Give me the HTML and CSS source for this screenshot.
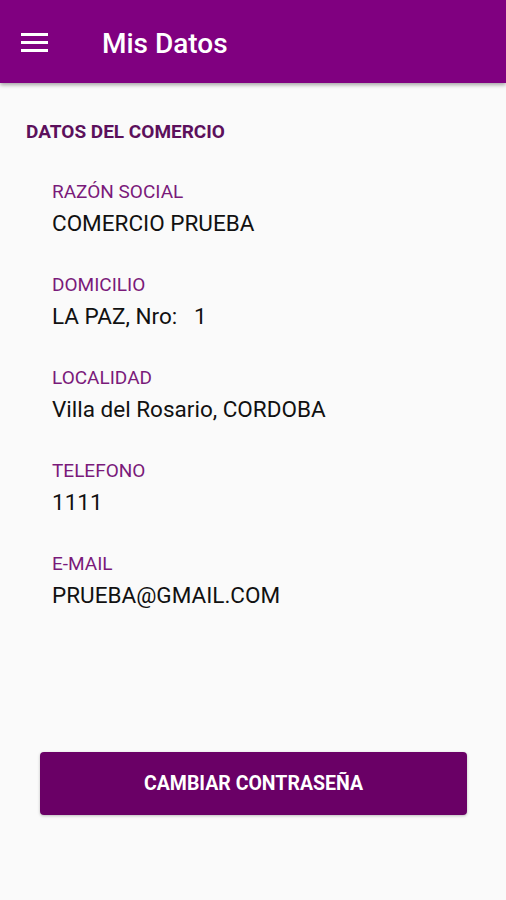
FILE: index.html
```html
<!DOCTYPE html>
<html lang="es">
<head>
<meta charset="UTF-8">
<title>Mis Datos</title>
<meta name="viewport" content="width=device-width, initial-scale=1.0">
<link rel="stylesheet" href="styles.css">
</head>
<body>

<header class="appbar">
<button class="menu" aria-label="Menu">
<svg width="27" height="20" viewBox="0 0 27 20"><rect x="0" y="1" width="27" height="3" fill="#fff"/><rect x="0" y="9" width="27" height="3" fill="#fff"/><rect x="0" y="17" width="27" height="3" fill="#fff"/></svg>
</button>
<h1>Mis Datos</h1>
</header>

<main class="content">
<h2 class="section-title">DATOS DEL COMERCIO</h2>

<div class="fields">
<div class="field"><div class="label">RAZÓN SOCIAL</div><div class="value">COMERCIO PRUEBA</div></div>
<div class="field"><div class="label">DOMICILIO</div><div class="value">LA PAZ, Nro:&nbsp;&nbsp; 1</div></div>
<div class="field"><div class="label">LOCALIDAD</div><div class="value">Villa del Rosario, CORDOBA</div></div>
<div class="field"><div class="label">TELEFONO</div><div class="value">1111</div></div>
<div class="field"><div class="label">E-MAIL</div><div class="value">PRUEBA@GMAIL.COM</div></div>
</div>

<div class="actions">
<button class="btn">CAMBIAR CONTRASEÑA</button>
</div>
</main>

</body>
</html>
```

FILE: styles.css
```css
body{margin:0;font-family:Roboto,"Noto Sans",sans-serif;background:#fafafa;color:#111;height:900px;overflow:hidden}
.appbar{height:83px;background:#800080;display:flex;align-items:center;box-shadow:0 2px 4px rgba(0,0,0,.35);position:relative}
.menu{background:none;border:none;padding:0;margin-left:21px;width:27px;height:20px;display:flex}
.appbar h1{margin:4px 0 0 54px;color:#fff;font-size:28px;font-weight:500}
.content{padding:37px 0 0 26px}
.section-title{margin:0;font-size:19px;font-weight:700;color:#5c105c;line-height:24px}
.fields{padding:37px 0 0 26px;display:flex;flex-direction:column;gap:38px}
.field{display:flex;flex-direction:column;gap:7px}
.label{font-size:19px;color:#7a1a7a;line-height:22px}
.value{font-size:22.5px;color:#111;line-height:26px}
.actions{padding:144px 39px 0 14px}
.btn{width:100%;height:63px;background:#6a0066;color:#fff;border:none;border-radius:4px;font-family:Roboto,sans-serif;font-size:19.5px;font-weight:700;box-shadow:0 1px 3px rgba(0,0,0,.25)}
```
